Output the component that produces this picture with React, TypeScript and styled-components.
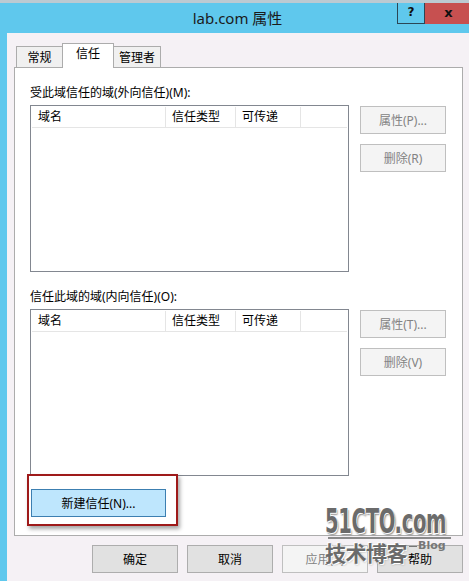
import React from "react";
import styled, { createGlobalStyle } from "styled-components";

const GlobalStyle = createGlobalStyle`
  html, body {
    margin: 0;
    padding: 0;
    background: #ffffff;
  }
  body {
    font-family: "Noto Sans", "Noto Sans CJK SC", sans-serif;
    font-size: 12px;
    color: #000;
  }
`;

const Window = styled.div`
  position: relative;
  width: 469px;
  height: 581px;
  overflow: hidden;
  background: #5fc8ed;
  display: flex;
  flex-direction: column;
`;

const TitleBar = styled.div`
  position: relative;
  height: 30px;
  flex: none;
  border-top: 3px solid #bccad2;
  display: flex;
  align-items: center;
  justify-content: center;
`;

const TitleText = styled.div`
  font-family: "Noto Sans", "Noto Sans CJK SC", sans-serif;
  font-size: 15px;
  color: #1b1b1b;
  margin-left: 6px;
  margin-top: -1px;
`;

const CaptionButtons = styled.div`
  position: absolute;
  top: 0;
  left: 397px;
  display: flex;
`;

const CaptionButton = styled.div<{ $close?: boolean }>`
  box-sizing: border-box;
  height: 21px;
  width: ${(p) => (p.$close ? "47px" : "28px")};
  background: ${(p) => (p.$close ? "#c75050" : "transparent")};
  border: ${(p) => (p.$close ? "none" : "1px solid #2b4656")};
  border-top: none;
  display: flex;
  align-items: center;
  justify-content: center;
  font-family: "DejaVu Sans", sans-serif;
  font-weight: bold;
  font-size: ${(p) => (p.$close ? "13px" : "12px")};
  color: #111;
  padding-bottom: 2px;
`;

const Client = styled.div`
  flex: 1;
  margin-left: 7px;
  background: #f5f1f5;
  padding: 10px 6px 0 7px;
  display: flex;
  flex-direction: column;
`;

const TabStrip = styled.div`
  display: flex;
  align-items: flex-end;
  height: 24px;
  padding-left: 2px;
`;

const Tab = styled.div<{ $active?: boolean }>`
  box-sizing: border-box;
  position: relative;
  z-index: ${(p) => (p.$active ? 2 : 1)};
  height: ${(p) => (p.$active ? "25px" : "21px")};
  min-width: ${(p) => (p.$active ? "52px" : "47px")};
  margin-left: -1px;
  margin-bottom: ${(p) => (p.$active ? "-1px" : "0")};
  padding: ${(p) => (p.$active ? "2px 6px 0" : "3px 5px 0")};
  background: ${(p) => (p.$active ? "#ffffff" : "#f0f0f0")};
  border: 1px solid #acacac;
  border-bottom: none;
  text-align: center;
  font-size: 12px;
  line-height: 16px;
  color: #000;
  &:first-child {
    margin-left: 0;
  }
`;

const Panel = styled.div`
  box-sizing: border-box;
  width: 449px;
  height: 469px;
  background: #ffffff;
  border: 1px solid #acacac;
  padding: 17px 0 0 15px;
  display: flex;
  flex-direction: column;
`;

const Section = styled.div<{ $first?: boolean }>`
  margin-top: ${(p) => (p.$first ? "0" : "17px")};
`;

const GroupLabel = styled.div`
  line-height: 16px;
  height: 16px;
  margin-bottom: 4px;
`;

const Row = styled.div`
  display: flex;
  align-items: flex-start;
`;

const ListBox = styled.div`
  box-sizing: border-box;
  width: 319px;
  height: 167px;
  border: 1px solid #828790;
  background: #fff;
  padding: 1px;
`;

const Header = styled.div`
  display: flex;
  height: 20px;
  border-bottom: 1px solid #e5e5e5;
`;

const HeaderCell = styled.div<{ $w: number }>`
  box-sizing: border-box;
  width: ${(p) => p.$w}px;
  height: 20px;
  border-right: 1px solid #e5e5e5;
  padding-left: 6px;
  line-height: 20px;
  color: #000;
`;

const SideButtons = styled.div`
  display: flex;
  flex-direction: column;
  gap: 10px;
  margin: 1px 0 0 11px;
`;

const Button = styled.div<{ $disabled?: boolean }>`
  box-sizing: border-box;
  width: 86px;
  height: 28px;
  border: 1px solid ${(p) => (p.$disabled ? "#bfbfbf" : "#adadad")};
  background: ${(p) => (p.$disabled ? "#f4f4f4" : "#e1e1e1")};
  color: ${(p) => (p.$disabled ? "#838383" : "#000")};
  display: flex;
  align-items: center;
  justify-content: center;
  font-size: 12px;
`;

const NewTrustWrap = styled.div`
  position: relative;
  margin: 13px 0 0 1px;
  width: 135px;
`;

const AccentButton = styled(Button)`
  width: 135px;
  background: #bee6fd;
  border-color: #3c7fb1;
`;

const Highlight = styled.div`
  position: absolute;
  left: -4px;
  top: -15px;
  width: 151px;
  height: 52px;
  box-sizing: border-box;
  border: 2px solid #9e1a1a;
  box-shadow: 2px 3px 4px rgba(0, 0, 0, 0.35);
  pointer-events: none;
`;

const Footer = styled.div`
  display: flex;
  justify-content: flex-end;
  gap: 9px;
  margin-top: 9px;
`;

const Watermark = styled.div`
  position: absolute;
  left: 325px;
  top: 506px;
  width: 130px;
  pointer-events: none;
  color: #6b6b6b;
`;

const SiteName = styled.div`
  font-family: "DejaVu Sans Condensed", "DejaVu Sans", sans-serif;
  font-weight: bold;
  font-size: 34px;
  line-height: 31px;
  white-space: nowrap;
  transform: scaleX(0.64);
  transform-origin: left center;
  letter-spacing: -0.5px;
  text-shadow: 1px 1px 0 #fff, -1px -1px 0 #fff, 2px 2px 2px #888;
`;

const Rule = styled.div`
  height: 2px;
  width: 123px;
  margin-left: 3px;
  background: #8a8a8a;
`;

const BlogLine = styled.div`
  display: flex;
  align-items: flex-start;
  margin-top: 1px;
`;

const BlogName = styled.div`
  font-family: "Noto Sans CJK SC", sans-serif;
  font-weight: bold;
  font-size: 21px;
  line-height: 24px;
  letter-spacing: -0.5px;
  text-shadow: 1px 1px 0 #fff, -1px -1px 0 #fff, 1px 1px 2px #999;
`;

const BlogTag = styled.div`
  font-family: "DejaVu Sans", sans-serif;
  font-weight: bold;
  font-size: 11px;
  line-height: 12px;
  margin-left: 2px;
  color: #777;
  &::before {
    content: "";
    display: inline-block;
    width: 8px;
    height: 1px;
    background: #777;
    vertical-align: middle;
    margin-right: 1px;
  }
`;

const columns = [
  { label: "域名", w: 134 },
  { label: "信任类型", w: 70 },
  { label: "可传递", w: 65 },
];

function TrustGroup(props: { label: string; buttons: string[]; first?: boolean }) {
  return (
    <Section $first={props.first}>
      <GroupLabel>{props.label}</GroupLabel>
      <Row>
        <ListBox>
          <Header>
            {columns.map((c) => (
              <HeaderCell key={c.label} $w={c.w}>
                {c.label}
              </HeaderCell>
            ))}
          </Header>
        </ListBox>
        <SideButtons>
          {props.buttons.map((b) => (
            <Button key={b} $disabled>
              {b}
            </Button>
          ))}
        </SideButtons>
      </Row>
    </Section>
  );
}

export default function App() {
  return (
    <>
      <GlobalStyle />
      <Window>
        <TitleBar>
          <TitleText>lab.com 属性</TitleText>
          <CaptionButtons>
            <CaptionButton>?</CaptionButton>
            <CaptionButton $close>x</CaptionButton>
          </CaptionButtons>
        </TitleBar>
        <Client>
          <TabStrip>
            <Tab>常规</Tab>
            <Tab $active>信任</Tab>
            <Tab>管理者</Tab>
          </TabStrip>
          <Panel>
            <TrustGroup first label="受此域信任的域(外向信任)(M):" buttons={["属性(P)...", "删除(R)"]} />
            <TrustGroup label="信任此域的域(内向信任)(O):" buttons={["属性(T)...", "删除(V)"]} />
            <NewTrustWrap>
              <Highlight />
              <AccentButton>新建信任(N)...</AccentButton>
            </NewTrustWrap>
          </Panel>
          <Footer>
            <Button>确定</Button>
            <Button>取消</Button>
            <Button $disabled>应用(A)</Button>
            <Button>帮助</Button>
          </Footer>
        </Client>
        <Watermark>
          <SiteName>51CTO.com</SiteName>
          <Rule />
          <BlogLine>
            <BlogName>技术博客</BlogName>
            <BlogTag>Blog</BlogTag>
          </BlogLine>
        </Watermark>
      </Window>
    </>
  );
}
